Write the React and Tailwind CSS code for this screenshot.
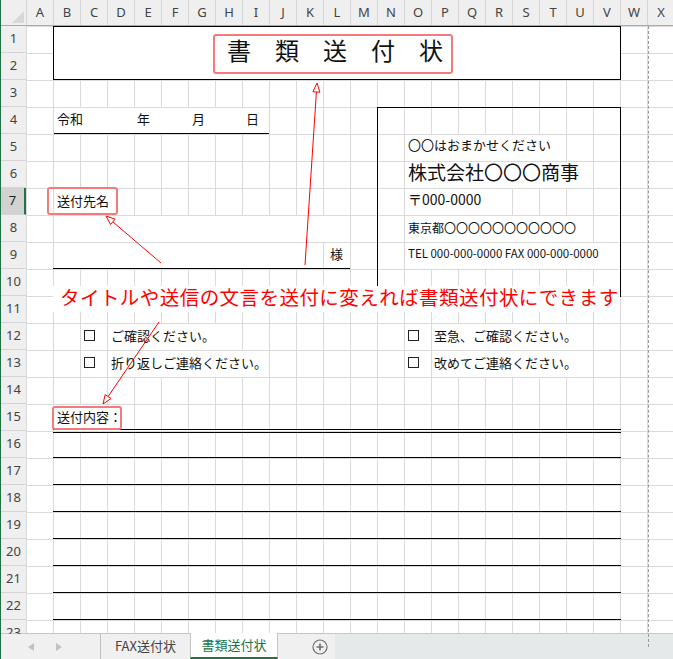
import React from "react"

const COLS = "ABCDEFGHIJKLMNOPQRSTUVWX".split("")
const ROWS = Array.from({ length: 23 }, (_, i) => i + 1)
const LINE_ROWS = ["row-start-16", "row-start-17", "row-start-18", "row-start-19", "row-start-20", "row-start-21", "row-start-22"]

// arrow: line from (x1,y1) to tip (x2,y2), open triangle head
function Arrow({ x1, y1, x2, y2 }) {
  const dx = x2 - x1
  const dy = y2 - y1
  const len = Math.hypot(dx, dy)
  const ux = dx / len
  const uy = dy / len
  const bx = x2 - ux * 9
  const by = y2 - uy * 9
  const px = -uy * 3.5
  const py = ux * 3.5
  return (
    <g>
      <line x1={x1} y1={y1} x2={bx} y2={by} stroke="#ff0000" strokeWidth="1" />
      <polygon
        points={`${x2},${y2} ${bx + px},${by + py} ${bx - px},${by - py}`}
        fill="#ffffff"
        stroke="#ff0000"
        strokeWidth="1"
      />
    </g>
  )
}

function Box() {
  return <span className="ml-[4px] mb-[3px] w-[11px] h-[11px] border border-[#222] bg-white" />
}

export default function App() {
  return (
    <div className="relative w-[673px] h-[659px] overflow-hidden bg-white border-l border-[#217346] font-['Noto_Sans_CJK_JP',sans-serif] text-[#111]">
      {/* column header */}
      <div className="flex h-[26px] bg-[#efefef] border-b border-[#ababab] font-['Noto_Sans',sans-serif] text-[13px] text-[#444]">
        <div className="relative w-[25px] shrink-0">
          <div className="absolute right-[2px] bottom-[2px] w-0 h-0 border-l-[12px] border-l-transparent border-b-[12px] border-b-[#d9d9d9]" />
        </div>
        {COLS.map((c) => (
          <div key={c} className="w-[27px] shrink-0 flex items-center justify-center border-l border-[#d5d5d5]">
            {c}
          </div>
        ))}
      </div>

      <div className="flex h-[607px]">
        {/* row header */}
        <div className="w-[25px] shrink-0 bg-[#efefef] font-['Noto_Sans',sans-serif] text-[13px] text-[#444]">
          {ROWS.map((r) => (
            <div
              key={r}
              className={`h-[27px] flex items-center justify-center border-b border-[#d5d5d5] ${
                r === 7 ? "bg-[#d2d2d2] border-r-2 border-r-[#217346] text-[#222]" : ""
              }`}
            >
              {r}
            </div>
          ))}
        </div>

        {/* sheet */}
        <div className="grid grid-cols-[repeat(24,27px)] grid-rows-[repeat(23,27px)] [background-image:linear-gradient(to_right,#dadada_1px,transparent_1px),linear-gradient(to_bottom,#dadada_1px,transparent_1px)] [background-size:27px_27px]">
          {/* title */}
          <div className="col-start-2 col-end-23 row-start-1 row-end-3 -mr-px bg-white border border-black flex items-center justify-center pb-[6px] pr-[4px] text-[24px] leading-none">
            書　類　送　付　状
          </div>

          {/* date row */}
          <div className="col-start-2 col-end-10 row-start-4 mt-px ml-px pb-[4px] bg-white border-b border-black grid grid-cols-[repeat(8,27px)] text-[13px] leading-none">
            <span className="col-start-1 flex items-center pl-[3px] whitespace-nowrap">令和</span>
            <span className="col-start-4 flex items-center pl-[2px]">年</span>
            <span className="col-start-6 flex items-center pl-[3px]">月</span>
            <span className="col-start-8 flex items-center pl-[3px]">日</span>
          </div>

          {/* right sender block */}
          <div className="col-start-15 col-end-21 row-start-5 mt-px ml-px pb-[8px] bg-white flex items-center pl-[3px] text-[13px] leading-none whitespace-nowrap">
            〇〇はおまかせください
          </div>
          <div className="col-start-15 col-end-22 row-start-6 mt-px ml-px pb-[8px] bg-white flex items-center pl-[3px] text-[19px] leading-none whitespace-nowrap">
            株式会社〇〇〇商事
          </div>
          <div className="col-start-15 col-end-19 row-start-7 mt-px ml-px pb-[6px] bg-white flex items-center pl-[3px] text-[14px] leading-none whitespace-nowrap">
            〒000-0000
          </div>
          <div className="col-start-15 col-end-22 row-start-8 mt-px ml-px pb-[3px] bg-white flex items-center pl-[3px] text-[12px] leading-none whitespace-nowrap">
            東京都〇〇〇〇〇〇〇〇〇〇〇
          </div>
          <div className="col-start-15 col-end-23 row-start-9 mt-px ml-px pb-[4px] bg-white flex items-center pl-[3px] text-[11.5px] leading-none whitespace-nowrap">
            TEL 000-000-0000 FAX 000-000-0000
          </div>
          <div className="col-start-14 col-end-23 row-start-4 row-end-11 -mr-px -mb-px border border-black" />

          {/* recipient */}
          <div className="col-start-2 col-end-5 row-start-7 mt-px ml-px pb-[4px] bg-white flex items-center pl-[3px] text-[13px] leading-none whitespace-nowrap">
            送付先名
          </div>
          <div className="col-start-2 col-end-13 row-start-8 mt-px ml-px bg-white" />
          <div className="col-start-2 col-end-12 row-start-9 mt-px ml-px bg-white" />
          <div className="col-start-12 row-start-9 flex items-center justify-center pb-[4px] text-[13px] leading-none">様</div>
          <div className="col-start-2 col-end-13 row-start-9 border-b border-black" />

          {/* note text box */}
          <div className="col-start-2 col-end-23 row-start-10 row-end-12 self-start mt-[17px] h-[26px] bg-white flex items-center pl-[7px] pb-[4px] text-[19.5px] leading-none tracking-[0.45px] text-[#ff0000] whitespace-nowrap">
            タイトルや送信の文言を送付に変えれば書類送付状にできます
          </div>

          {/* check items */}
          <div className="col-start-3 row-start-12 flex items-center"><Box /></div>
          <div className="col-start-4 col-end-9 row-start-12 mt-px ml-px pb-[4px] bg-white flex items-center pl-[3px] text-[13px] leading-none whitespace-nowrap">
            ご確認ください。
          </div>
          <div className="col-start-15 row-start-12 flex items-center"><Box /></div>
          <div className="col-start-16 col-end-22 row-start-12 mt-px ml-px pb-[4px] bg-white flex items-center pl-[2px] text-[13px] leading-none whitespace-nowrap">
            至急、ご確認ください。
          </div>
          <div className="col-start-3 row-start-13 flex items-center"><Box /></div>
          <div className="col-start-4 col-end-10 row-start-13 mt-px ml-px pb-[4px] bg-white flex items-center pl-[3px] text-[13px] leading-none whitespace-nowrap">
            折り返しご連絡ください。
          </div>
          <div className="col-start-15 row-start-13 flex items-center"><Box /></div>
          <div className="col-start-16 col-end-22 row-start-13 mt-px ml-px pb-[4px] bg-white flex items-center pl-[2px] text-[13px] leading-none whitespace-nowrap">
            改めてご連絡ください。
          </div>

          {/* content lines */}
          <div className="col-start-2 col-end-5 row-start-15 mt-px ml-px pb-[4px] bg-white flex items-center pl-[3px] text-[13px] leading-none whitespace-nowrap">
            送付内容：
          </div>
          <div className="col-start-2 col-end-23 row-start-15 -mr-px -mb-[2px] border-b-4 border-double border-black" />
          {LINE_ROWS.map((r) => (
            <div key={r} className={`col-start-2 col-end-23 ${r} -mr-px border-b border-black`} />
          ))}

          {/* page break */}
          <div className="col-start-24 row-start-1 row-end-24 ml-px border-l border-dashed border-[#9a9a9a]" />
        </div>
      </div>

      {/* sheet tabs */}
      <div className="flex h-[26px] border-t border-[#c6c6c6] bg-[#e6e9ea] text-[13px] leading-none">
        <div className="w-[100px] bg-[#f0f0f0] flex items-center border-r border-[#c0c0c0]">
          <svg width="6" height="8" viewBox="0 0 6 8" className="ml-[27px]">
            <polygon points="6,0 0,4 6,8" fill="#c2c2c2" />
          </svg>
          <svg width="6" height="8" viewBox="0 0 6 8" className="ml-[22px]">
            <polygon points="0,0 6,4 0,8" fill="#c2c2c2" />
          </svg>
        </div>
        <div className="w-[89px] bg-[#f0f0f0] flex items-center justify-center pb-[2px] text-[#444]">FAX送付状</div>
        <div className="w-[88px] -mt-px bg-white border-x border-[#c6c6c6] border-b-2 border-b-[#217346] flex items-center justify-center pb-[1px] text-[#217346]">
          書類送付状
        </div>
        <div className="w-[57px] bg-[#f0f0f0] flex items-center">
          <svg width="16" height="16" viewBox="0 0 16 16" className="ml-[34px]">
            <circle cx="8" cy="8" r="7" fill="none" stroke="#6e6e6e" strokeWidth="1.2" />
            <path d="M8 4.5v7M4.5 8h7" stroke="#6e6e6e" strokeWidth="1.6" />
          </svg>
        </div>
      </div>

      {/* callout frames and arrows */}
      <div className="absolute left-[212px] top-[34px] w-[240px] h-[40px] border-2 border-[#f47b7b] rounded-[3px]" />
      <div className="absolute left-[46px] top-[187px] w-[71px] h-[28px] border-2 border-[#f47b7b] rounded-[3px]" />
      <div className="absolute left-[51px] top-[406px] w-[70px] h-[24px] border-2 border-[#f47b7b] rounded-[3px]" />
      <svg className="absolute inset-0 pointer-events-none" width="673" height="659" viewBox="0 0 673 659">
        <Arrow x1={160} y1={263} x2={105} y2={216} />
        <Arrow x1={304} y1={265} x2={316} y2={83} />
        <Arrow x1={158} y1={322} x2={102} y2={404} />
      </svg>
    </div>
  )
}
